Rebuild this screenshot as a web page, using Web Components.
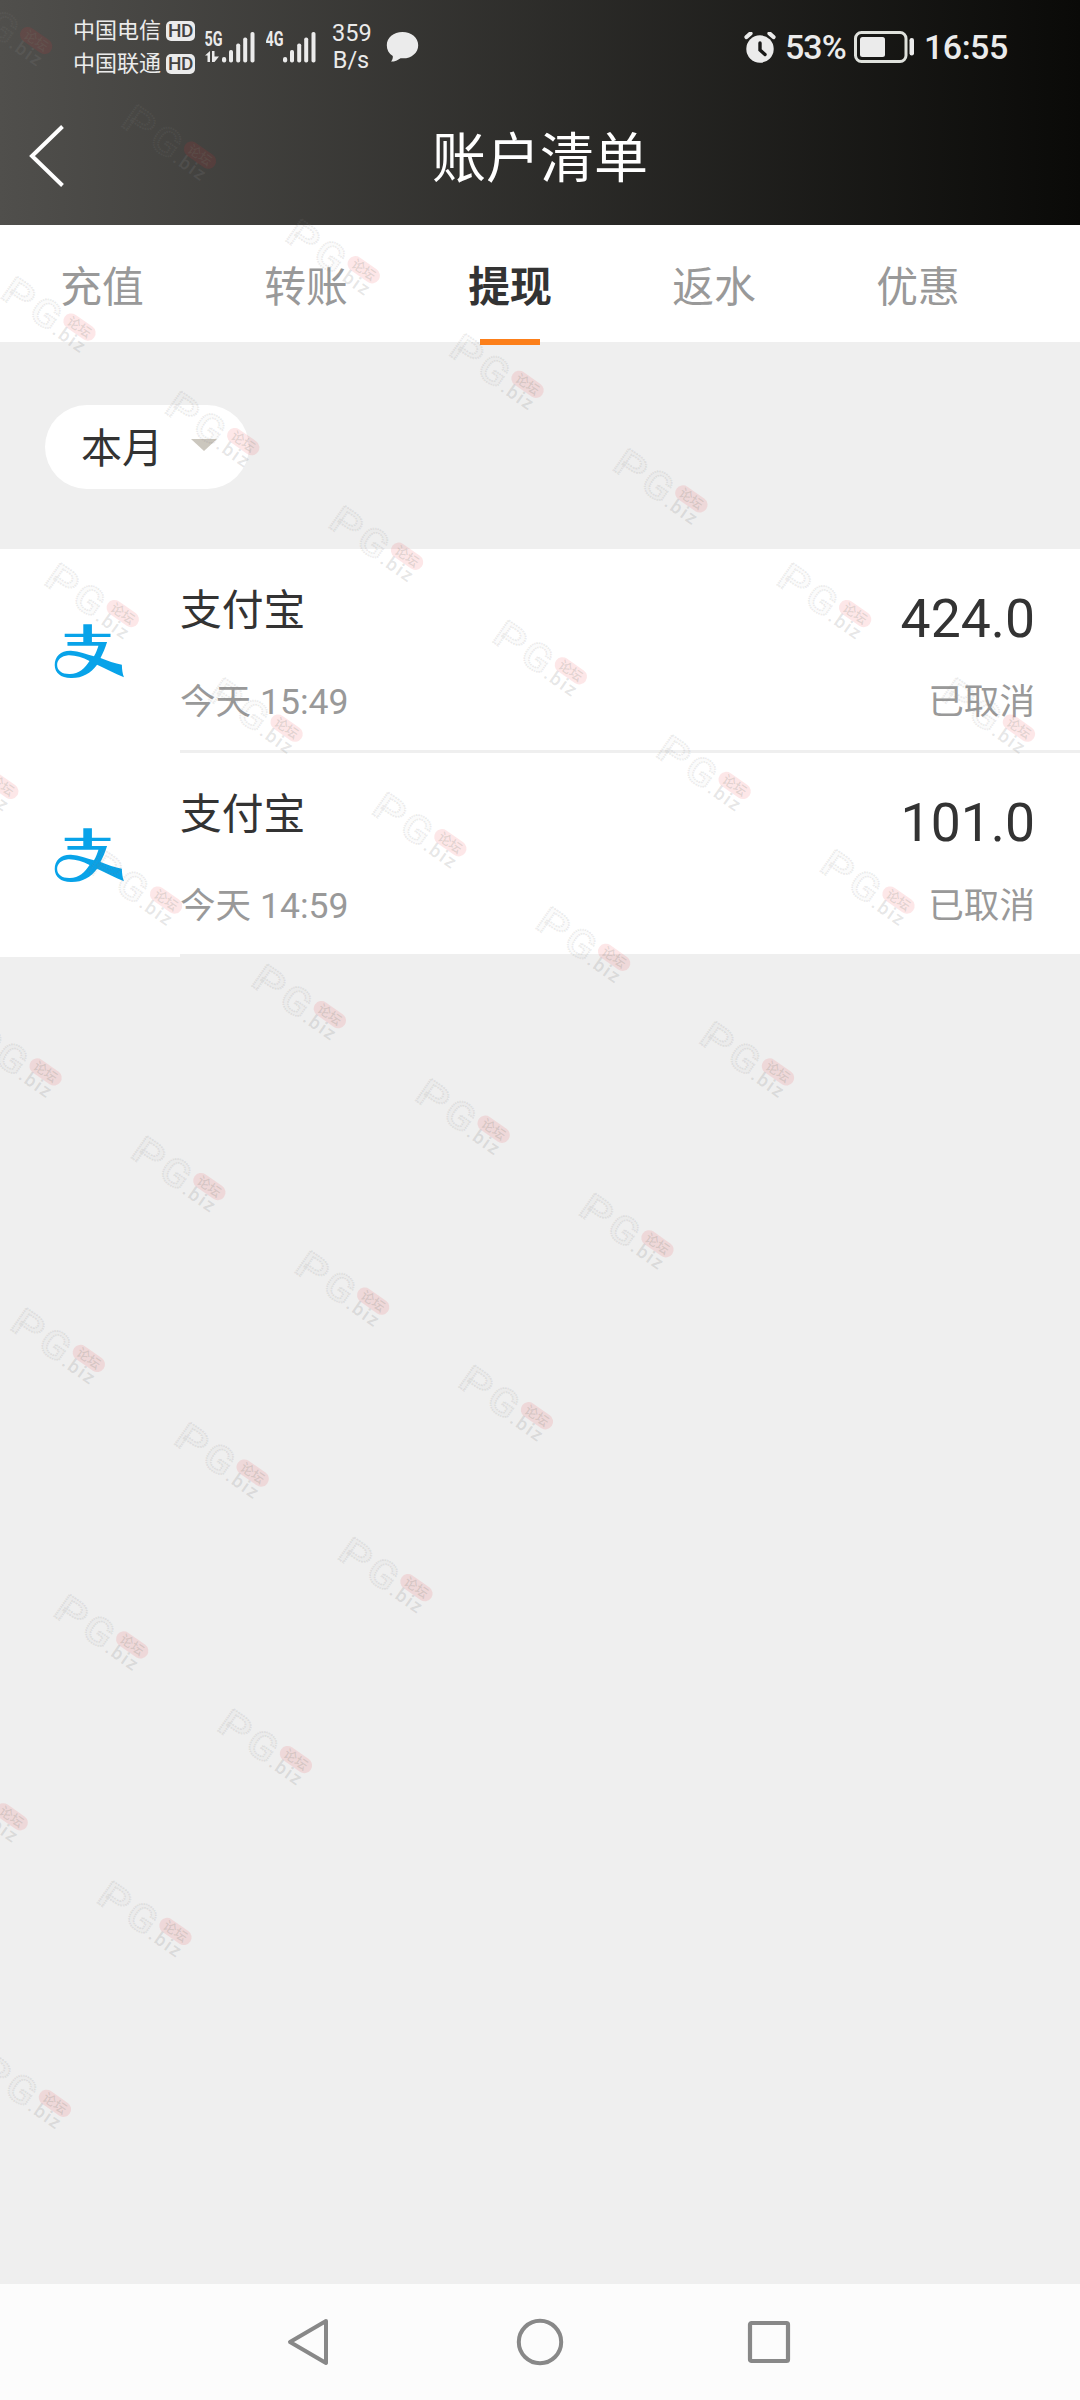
<!DOCTYPE html>
<html lang="zh-CN">
<head>
<meta charset="utf-8">
<title>账户清单</title>
<style>
html,body{margin:0;padding:0}
body{font-family:Roboto,"Noto Sans CJK SC",sans-serif;color:#333;background:#efefef}
</style>
</head>
<body>
<account-page></account-page>
<script>
const define = (name, html, setup) => {
  const t = document.createElement('template');
  t.innerHTML = html;
  customElements.define(name, class extends HTMLElement {
    constructor() {
      super();
      this.attachShadow({mode: 'open'}).append(t.content.cloneNode(true));
    }
    connectedCallback() { if (setup) setup(this, this.shadowRoot); }
  });
};

define('carrier-line', `
<style>
:host{display:flex;align-items:center;height:33px;font-size:22px;line-height:33px;white-space:nowrap}
.hd{box-sizing:border-box;width:29px;height:20px;margin-left:5px;border-radius:5px;background:#ebebeb;color:#42413f;font:500 19px/20.5px Roboto,sans-serif;text-align:center;letter-spacing:-.5px}
</style><slot></slot><span class="hd">HD</span>`);

define('signal-icon', `
<style>
:host{display:block;width:50px;height:32px}
svg{display:block}
text{font:700 20px Roboto,sans-serif;fill:#ebebeb}
#data{display:none}
:host([data]) #data{display:block}
</style>
<svg width="50" height="32" viewBox="0 0 50 32" fill="#ebebeb">
<text x="-.5" y="14.5" textLength="18" lengthAdjust="spacingAndGlyphs"></text>
<g id="data"><path d="M0 24.5 5 20V31H2.5V24.5ZM7 20H9.500V25.500H14L9.500 31H7Z"/></g>
<rect x="17" y="26" width="4.200" height="5.500" rx="2"/>
<rect x="24" y="19" width="4" height="12.500" rx="1.800"/>
<rect x="31.200" y="12.500" width="4" height="19" rx="1.800"/>
<rect x="38.200" y="6.500" width="4" height="25" rx="1.800"/>
<rect x="45.500" y="1" width="4" height="30.500" rx="1.800"/>
</svg>`, (el, root) => { root.querySelector('text').textContent = el.getAttribute('network'); });

define('status-bar', `
<style>
:host{display:flex;align-items:center;box-sizing:border-box;height:94px;padding:0 71px 0 73px;color:#ebebeb}
.carriers{display:flex;flex-direction:column;width:132px}
.gap{margin-left:11px}
.speed{margin-left:16px;width:38px;font-size:23.500px;line-height:27.500px;text-align:center}
.bubble{margin-left:16px}
.right{display:flex;align-items:center;margin-left:auto;font-weight:500;font-size:34px;line-height:40px}
.right svg{display:block}
.pct{width:61px;margin:0 8px 0 9px;letter-spacing:-1px}
.time{width:85px;margin-left:9px;letter-spacing:-.5px}
</style>
<div class="carriers"><carrier-line>中国电信</carrier-line><carrier-line>中国联通</carrier-line></div>
<signal-icon network="5G" data></signal-icon>
<signal-icon class="gap" network="4G"></signal-icon>
<div class="speed">359<br>B/s</div>
<svg class="bubble" width="33" height="32" viewBox="0 0 33 32"><path d="M16.500 1C7.500 1 .8 6.800.8 14.200c0 4.500 2 8.300 6 10.800.2 2.300-.6 4.200-1.800 5.600 3.800 0 7-1.500 9.500-3.400 10 1.200 17.700-4.900 17.700-13C32.200 6.800 25.500 1 16.500 1Z" fill="#ebebeb"/></svg>
<div class="right">
<svg width="32" height="31" viewBox="0 0 32 31"><circle cx="16" cy="17" r="13.700" fill="#ebebeb"/><path d="m2.500 5 4-3.500M29.500 5l-4-3.500" stroke="#ebebeb" stroke-width="4.200" stroke-linecap="round"/><path d="M16 11v7l5 4.500" fill="none" stroke="#191918" stroke-width="3.400" stroke-linecap="round"/></svg>
<span class="pct">53%</span>
<svg width="61" height="32" viewBox="0 0 61 32"><rect x="1.500" y="1.500" width="50.500" height="29" rx="6" fill="none" stroke="#dfe1dc" stroke-width="3"/><rect x="6" y="6" width="25" height="20" rx="2.500" fill="#ebebeb"/><rect x="55.500" y="7" width="4.500" height="17.500" rx="2.200" fill="#ebebeb"/></svg>
<span class="time">16:55</span>
</div>`);

define('title-bar', `
<style>
:host{display:grid;grid-template-columns:100px 1fr 100px;align-items:center;height:131px;color:#fff}
svg{display:block;margin:0 0 7px 29px}
h1{margin:1px 0 0;font-size:54px;font-weight:400;line-height:80px;text-align:center}
</style>
<svg width="36" height="62" viewBox="0 0 36 62"><path d="M33.500 1.500 3 31l30.500 29.500" fill="none" stroke="#fff" stroke-width="4"/></svg>
<h1><slot></slot></h1>`);

define('type-tab', `
<style>
:host{display:flex;justify-content:center;width:204px;height:117px;font-size:41.800px;line-height:125px;color:#999}
span{display:flex;flex-direction:column;align-items:center;height:120px}
b{font-weight:inherit;height:114px}
i{display:none;width:60px;height:6px;background:#fc7f1a}
:host([active]){color:#333;font-weight:700}
:host([active]) i{display:block}
</style><span><b><slot></slot></b><i></i></span>`);

define('type-tabs', `
<style>:host{display:flex;height:117px;background:#fff}</style><slot></slot>`);

define('month-filter', `
<style>
:host{display:flex;align-items:center;height:207px;padding:0 45px;box-sizing:border-box}
div{display:flex;align-items:center;box-sizing:border-box;width:204px;height:84px;padding:0 32px 0 36px;justify-content:space-between;border-radius:42px;background:#fff;font-size:41px;line-height:84px;margin-top:2px}
span{padding-top:5px}
svg{display:block;margin-top:-3px}
</style><div><span><slot></slot></span><svg width="26" height="12" viewBox="0 0 26 12"><path d="M0 0h26L13 12Z" fill="#cbc7be"/></svg></div>`);

define('record-row', `
<style>
:host{display:flex;height:204px;background:#fff}
.icon{width:125px;padding:74px 0 0 53px;box-sizing:border-box;margin-right:55px}
svg{display:block}
.body{flex:1;box-sizing:border-box;border-bottom:3px solid #efefef;padding:31px 45px 0 0}
.line{display:flex;justify-content:space-between}
.top{height:95px}
.name{font-size:41.800px;line-height:62px}
.amount{font-size:53.500px;line-height:78px}
.sub{font-size:35.600px;line-height:55px;color:#999}
</style>
<div class="icon"><svg width="73" height="56" viewBox="155 248 212 168" preserveAspectRatio="none"><path fill="#08a3e9" fill-rule="evenodd" d="M243 252H268V280H322V290H268V305H312C307 323 300 339 293 353C313 362 335 369 355 373C355 386 357 400 361 411C334 399 307 384 283 373C264 399 239 414 207 413C177 413 160 397 160 374C160 347 178 330 207 331C231 333 253 341 274 348C280 337 284 326 287 316H197V305H243V290H189V280H243ZM261 362C240 351 218 344 199 345C180 347 167 358 167 374C167 391 181 401 202 401C229 402 248 384 261 362Z"/></svg></div>
<div class="body">
<div class="line top"><span class="name"><slot></slot></span><span class="amount"><slot name="amount"></slot></span></div>
<div class="line sub"><span><slot name="time"></slot></span><span><slot name="state"></slot></span></div>
</div>`);

define('nav-bar', `
<style>
:host{display:grid;grid-template-columns:1fr 232px 1fr;align-items:center;height:116px;background:#fcfcfc}
svg{display:block}
.back{justify-self:end;margin-right:94px}
.home{justify-self:center}
.recent{margin-left:91px}
</style>
<svg class="back" width="44" height="48" viewBox="0 0 44 48"><path d="M40 3 4 24l36 21Z" fill="none" stroke="#888" stroke-width="4" stroke-linejoin="round"/></svg>
<svg class="home" width="48" height="48" viewBox="0 0 48 48"><circle cx="24" cy="24" r="21.200" fill="none" stroke="#888" stroke-width="4"/></svg>
<svg class="recent" width="44" height="44" viewBox="0 0 44 44"><rect x="3" y="3" width="38" height="38" rx="1.500" fill="none" stroke="#888" stroke-width="4.200"/></svg>`);

define('forum-marks', `
<style>
:host{position:absolute;inset:0;overflow:hidden;pointer-events:none}
svg{display:block}
text{font-family:Roboto,sans-serif;font-weight:700}
.big{font-size:38px;font-weight:500;fill:rgba(128,128,128,.05);stroke:rgba(128,128,128,.15);stroke-width:1.800;stroke-dasharray:1.500 .8}
.biz{font-size:18.500px;font-weight:500;fill:rgba(128,128,128,.2)}
.cn{font:500 13px "Noto Sans CJK SC",sans-serif;fill:rgba(110,125,110,.2)}
</style>
<svg width="1080" height="2400" viewBox="0 0 1080 2400"></svg>`, (el, root) => {
  // Slanted lattice of stamps, each row running down to the right.
  const stepX = 163.8, stepY = 114.6;
  let out = '';
  for (let row = -4; row <= 4; row++) {
    for (let k = -4; k <= 2; k++) {
      const x = 130.4 - 120.5 * row + stepX * k;
      const y = 1136.2 + 171.9 * row + stepY * k;
      if (x < -95) continue;
      out += `<g transform="translate(${x.toFixed(1)} ${(y + 21).toFixed(1)}) rotate(35)">
<text class="big" transform="translate(-2 0) scale(1.26 1)">P</text>
<text class="big" transform="translate(32 0) scale(1.1 1)">G</text>
<rect x="63.500" y="-29" width="36" height="15.500" rx="7.700" fill="rgba(236,40,50,.115)"/>
<text class="cn" x="68.500" y="-16.500">论坛</text>
<text class="biz" x="62" y="0" textLength="35">.biz</text></g>`;
    }
  }
  root.querySelector('svg').innerHTML = out;
});

define('account-page', `
<style>
:host{display:flex;flex-direction:column;position:relative;width:1080px;height:2400px;overflow:hidden;background:#efefef}
header{background:linear-gradient(90deg,#504f4c,#0a0a08);height:225px}
main{flex:1}
</style>
<header><status-bar></status-bar><title-bar>账户清单</title-bar></header>
<type-tabs><type-tab>充值</type-tab><type-tab>转账</type-tab><type-tab active>提现</type-tab><type-tab>返水</type-tab><type-tab>优惠</type-tab></type-tabs>
<main>
<month-filter>本月</month-filter>
<record-row>支付宝<span slot="amount">424.0</span><span slot="time">今天 15:49</span><span slot="state">已取消</span></record-row>
<record-row>支付宝<span slot="amount">101.0</span><span slot="time">今天 14:59</span><span slot="state">已取消</span></record-row>
</main>
<nav-bar></nav-bar>
<forum-marks></forum-marks>`);
</script>
</body>
</html>
